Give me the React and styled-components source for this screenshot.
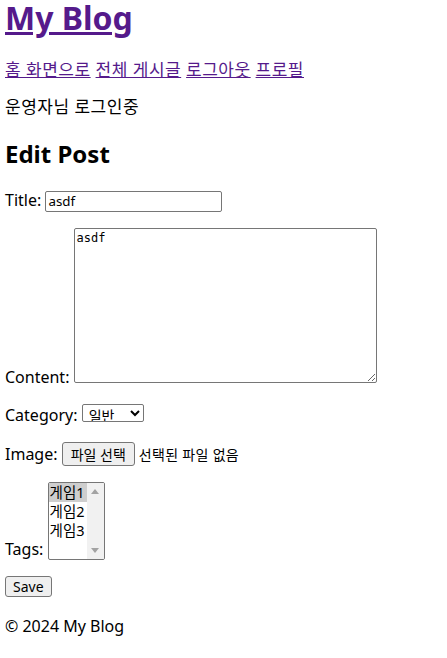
import React from "react";
import styled, { createGlobalStyle } from "styled-components";

const GlobalStyle = createGlobalStyle`
  body {
    margin: 0;
    font-family: "Noto Sans", "Noto Sans CJK KR", sans-serif;
    font-size: 16px;
    color: #000;
    background: #fff;
  }
`;

const Page = styled.div`
  padding: 0 5px;
`;

const Title = styled.h1`
  margin: 0;
  font-size: 32px;
  line-height: 36px;
  font-weight: 700;
`;

const Link = styled.a`
  color: #551a8b;
  text-decoration: underline;
`;

// Korean text renders a touch narrower than in the reference
const Ko = styled.span`
  font-size: ${({ $size }) => $size ?? 17}px;
  letter-spacing: ${({ $ls }) => $ls ?? 0.5}px;
`;

const Nav = styled.nav`
  margin-top: 24px;
  line-height: 20px;
`;

const Status = styled.p`
  margin: 17px 0 0;
  line-height: 20px;
`;

const Heading = styled.h2`
  margin: 23px 0 0;
  font-size: 24px;
  line-height: 28px;
  font-weight: 700;
`;

const Form = styled.form`
  margin-top: 22px;
`;

const Row = styled.div`
  margin: ${({ $top }) => $top ?? 16}px 0 0;
  line-height: 21px;
`;

const TextInput = styled.input`
  box-sizing: border-box;
  width: 177px;
  height: 21px;
  padding: 1px 2px;
  border: 1px solid #767676;
  border-radius: 2px;
  font-family: "Noto Sans", "Noto Sans CJK KR", sans-serif;
  font-size: 13.33px;
  color: #000;
`;

const TextArea = styled.textarea`
  box-sizing: border-box;
  width: 303px;
  height: 155px;
  padding: 2px;
  border: 1px solid #767676;
  border-radius: 2px;
  font-family: "DejaVu Sans Mono", monospace;
  font-size: 12px;
  line-height: 15px;
  resize: both;
  vertical-align: baseline;
`;

const Select = styled.select`
  box-sizing: border-box;
  width: 62px;
  height: 18px;
  padding: 0 0 0 2px;
  border: 1px solid #767676;
  border-radius: 2px;
  background: #fff;
  font-family: "Noto Sans", "Noto Sans CJK KR", sans-serif;
  font-size: 14px;
  color: #000;
`;

const Button = styled.button`
  box-sizing: border-box;
  height: ${({ $h }) => $h ?? 21}px;
  padding: 0 ${({ $px }) => $px ?? 6}px;
  border: 1px solid #767676;
  border-radius: 3px;
  background: #efefef;
  font-family: "Noto Sans", "Noto Sans CJK KR", sans-serif;
  font-size: ${({ $fs }) => $fs ?? 13.33}px;
  color: #000;
`;

const FileNote = styled.span`
  margin-left: 4px;
  font-size: 14px;
  letter-spacing: 0.3px;
`;

const ListBox = styled.div`
  box-sizing: border-box;
  display: inline-block;
  width: 57px;
  height: 78px;
  border: 1px solid #767676;
  border-radius: 2px;
  overflow: hidden;
  vertical-align: -5px;
  background: #fff;
`;

const ListInner = styled.div`
  display: flex;
  height: 100%;
`;

const Options = styled.div`
  flex: 1;
`;

const Option = styled.div`
  height: 19px;
  padding-left: 1px;
  font-size: 14.5px;
  line-height: 19px;
  background: ${({ $selected }) => ($selected ? "#cecece" : "transparent")};
`;

const ScrollBar = styled.div`
  width: 17px;
  display: flex;
  flex-direction: column;
  justify-content: space-between;
  align-items: center;
  background: #f1f1f1;
  padding: 6px 0;
`;

const Arrow = ({ down }) => (
  <svg width="8" height="5" viewBox="0 0 8 5">
    <polygon points={down ? "0,0 8,0 4,5" : "0,5 8,5 4,0"} fill="#a3a3a3" />
  </svg>
);

const Footer = styled.footer`
  margin-top: 19px;
  line-height: 21px;
`;

export default function App() {
  return (
    <Page>
      <GlobalStyle />
      <Title>
        <Link href="#">My Blog</Link>
      </Title>
      <Nav>
        <Ko>
          <Link href="#">홈 화면으로</Link> <Link href="#">전체 게시글</Link>{" "}
          <Link href="#">로그아웃</Link> <Link href="#">프로필</Link>
        </Ko>
      </Nav>
      <Status>
        <Ko>운영자님 로그인중</Ko>
      </Status>
      <Heading>Edit Post</Heading>
      <Form>
        <Row $top={0}>
          Title: <TextInput defaultValue="asdf" />
        </Row>
        <Row>
          Content: <TextArea defaultValue="asdf" />
        </Row>
        <Row>
          Category:{" "}
          <Select defaultValue="일반">
            <option>일반</option>
            <option>게임</option>
          </Select>
        </Row>
        <Row>
          Image:{" "}
          <Button type="button" $h={24} $px={8} $fs={14}>
            파일 선택
          </Button>
          <FileNote>선택된 파일 없음</FileNote>
        </Row>
        <Row>
          Tags:{" "}
          <ListBox>
            <ListInner>
              <Options>
                <Option $selected>게임1</Option>
                <Option>게임2</Option>
                <Option>게임3</Option>
              </Options>
              <ScrollBar>
                <Arrow />
                <Arrow down />
              </ScrollBar>
            </ListInner>
          </ListBox>
        </Row>
        <Row>
          <Button type="button" $px={7} $fs={14}>
            Save
          </Button>
        </Row>
      </Form>
      <Footer>© 2024 My Blog</Footer>
    </Page>
  );
}
